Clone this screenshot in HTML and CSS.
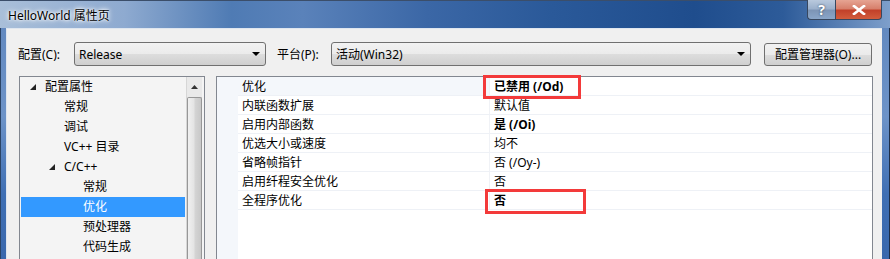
FILE: index.html
```html
<!DOCTYPE html>
<html lang="zh-CN">
<head>
  <meta charset="UTF-8" />
  <title>HelloWorld 属性页</title>
  <link rel="stylesheet" href="styles.css">
</head>
<body>
  <div class="window">
    <div class="titlebar">
      <span class="title">HelloWorld 属性页</span>
      <div class="caption-buttons">
        <div class="cap-btn help">?</div>
        <div class="cap-btn close">
          <svg width="14" height="10" viewBox="0 0 14 10"><path d="M2 1 L12 9 M12 1 L2 9" stroke="#fff" stroke-width="2.6" stroke-linecap="square"/></svg>
        </div>
      </div>
    </div>

    <div class="client">
      <div class="toolbar">
        <label class="field-label">配置(C):</label>
        <div class="combo combo-config">
          <span>Release</span>
          <span class="drop-arrow"></span>
        </div>
        <label class="field-label platform-label">平台(P):</label>
        <div class="combo combo-platform">
          <span>活动(Win32)</span>
          <span class="drop-arrow"></span>
        </div>
        <button class="config-manager">配置管理器(O)...</button>
      </div>

      <div class="main">
        <div class="tree">
          <ul class="tree-list">
            <li class="tree-row lvl0"><span class="expander"><svg width="6" height="6" viewBox="0 0 6 6"><polygon points="6,0 6,6 0,6" fill="#222"/></svg></span>配置属性</li>
            <li class="tree-row lvl1">常规</li>
            <li class="tree-row lvl1">调试</li>
            <li class="tree-row lvl1">VC++ 目录</li>
            <li class="tree-row lvl1 has-arrow"><span class="expander"><svg width="6" height="6" viewBox="0 0 6 6"><polygon points="6,0 6,6 0,6" fill="#222"/></svg></span>C/C++</li>
            <li class="tree-row lvl2">常规</li>
            <li class="tree-row lvl2 selected">优化</li>
            <li class="tree-row lvl2">预处理器</li>
            <li class="tree-row lvl2">代码生成</li>
          </ul>
          <div class="scrollbar">
            <div class="scroll-up"><svg width="7" height="4" viewBox="0 0 7 4"><polygon points="3.5,0 7,4 0,4" fill="#333"/></svg></div>
            <div class="scroll-thumb"></div>
          </div>
        </div>

        <div class="grid">
          <div class="gutter"></div>
          <div class="grid-rows">
            <div class="prop-row current"><span class="prop-name">优化</span><span class="prop-value bold">已禁用 (/Od)</span></div>
            <div class="prop-row"><span class="prop-name">内联函数扩展</span><span class="prop-value">默认值</span></div>
            <div class="prop-row"><span class="prop-name">启用内部函数</span><span class="prop-value bold">是 (/Oi)</span></div>
            <div class="prop-row"><span class="prop-name">优选大小或速度</span><span class="prop-value">均不</span></div>
            <div class="prop-row"><span class="prop-name">省略帧指针</span><span class="prop-value">否 (/Oy-)</span></div>
            <div class="prop-row"><span class="prop-name">启用纤程安全优化</span><span class="prop-value">否</span></div>
            <div class="prop-row"><span class="prop-name">全程序优化</span><span class="prop-value bold">否</span></div>
          </div>
          <div class="mark mark-one"></div>
          <div class="mark mark-two"></div>
        </div>
      </div>
    </div>
  </div>
</body>
</html>
```

FILE: styles.css
```css
body {
  margin: 0;
  padding: 0;
  width: 890px;
  height: 259px;
  overflow: hidden;
  font-family: "Noto Sans", "Noto Sans CJK SC", sans-serif;
  font-size: 12px;
  color: #000;
}

.window {
  height: 259px;
  display: flex;
  flex-direction: column;
  padding: 0 8px 0 6px;
  background:
    linear-gradient(180deg, #5f86bd 0%, #6d93c8 45%, #3f6fb4 75%, #3a68ad 100%);
  box-shadow: inset 1px 0 0 #2b4466, inset -1px 0 0 #1d2e48;
}

.titlebar {
  height: 28px;
  margin: 0 -8px 0 -6px;
  padding: 0 8px 0 8px;
  display: flex;
  align-items: flex-start;
  background: linear-gradient(90deg, #a9bfd9 0%, #8eaad0 14%, #4f7bb4 26%, #5a82ba 34%, #3b67a6 48%, #2a5999 62%, #1f4d8d 78%, #2d5b99 88%, #7e9fcb 100%);
  border-top: 1px solid #3b4e6a;
  box-sizing: border-box;
}

.title {
  margin-top: 5px;
  text-shadow: 0 0 6px #fff, 0 0 4px #fff, 0 0 2px #fff;
  font-size: 12px;
}

.caption-buttons {
  margin-left: auto;
  display: flex;
  margin-top: -1px;
}

.cap-btn {
  height: 20px;
  box-sizing: border-box;
  border: 1px solid #37475f;
  border-top: none;
  display: flex;
  align-items: center;
  justify-content: center;
  color: #fff;
  font-weight: bold;
  font-size: 14px;
}

.help {
  width: 28px;
  border-radius: 0 0 0 4px;
  border-right: none;
  background: linear-gradient(180deg, #b9c9dd 0%, #9cb1cc 45%, #7d95b6 55%, #8aa6c9 100%);
  text-shadow: 0 0 2px #234;
}

.close {
  width: 47px;
  border-radius: 0 0 4px 0;
  background: linear-gradient(180deg, #e6a493 0%, #d7806c 45%, #c2412a 55%, #d25c3c 100%);
}

.client {
  flex: 1;
  background: #f0f0f0;
  border-top: 1px solid #dfe6ef;
  border-left: 1px solid #dfe6ef;
  display: flex;
  flex-direction: column;
  min-height: 0;
}

.toolbar {
  display: flex;
  align-items: center;
  height: 24px;
  margin-top: 13px;
  padding-left: 11px;
}

.field-label {
  width: 56px;
}

.platform-label {
  margin-left: 11px;
  width: 54px;
}

.combo {
  height: 24px;
  box-sizing: border-box;
  border: 1px solid #707070;
  border-radius: 3px;
  background: linear-gradient(180deg, #f2f2f2 0%, #ebebeb 50%, #dddddd 51%, #cfcfcf 100%);
  display: flex;
  align-items: center;
  padding-left: 4px;
  padding-right: 5px;
}

.combo span:first-child {
  flex: 1;
}

.combo-config {
  width: 192px;
}

.combo-platform {
  width: 420px;
}

.drop-arrow {
  width: 0;
  height: 0;
  border-left: 4px solid transparent;
  border-right: 4px solid transparent;
  border-top: 4px solid #000;
}

.config-manager {
  margin-left: 13px;
  width: 108px;
  height: 23px;
  border: 1px solid #707070;
  border-radius: 3px;
  background: linear-gradient(180deg, #f2f2f2 0%, #ebebeb 50%, #dddddd 51%, #cfcfcf 100%);
  font-family: inherit;
  font-size: 12px;
  padding: 0;
  color: #000;
}

.main {
  display: flex;
  flex: 1;
  margin-top: 10px;
  padding-left: 12px;
  gap: 11px;
  min-height: 0;
}

.tree {
  width: 186px;
  box-sizing: border-box;
  border: 1px solid #828790;
  border-bottom: none;
  background: #f4f4f4;
  display: flex;
}

.tree-list {
  list-style: none;
  margin: 0;
  padding: 0;
  width: 167px;
}

.tree-row {
  height: 20px;
  line-height: 20px;
  white-space: nowrap;
  display: flex;
  align-items: center;
}

.expander {
  width: 15px;
  display: flex;
  align-items: center;
  padding-bottom: 1px;
}

.lvl0 { padding-left: 10px; }
.lvl1 { padding-left: 44px; }
.lvl1.has-arrow { padding-left: 29px; }
.lvl2 { padding-left: 63px; }

.selected {
  background: #3399ff;
  color: #fff;
  margin: 0 1px;
  padding-left: 62px;
}

.scrollbar {
  width: 15px;
  margin-right: 2px;
  border-left: 1px solid #d6d6d6;
  background: #e9e9e9;
  display: flex;
  flex-direction: column;
}

.scroll-up {
  height: 20px;
  display: flex;
  align-items: center;
  justify-content: center;
}

.scroll-thumb {
  flex: 1;
  border: 1px solid #979797;
  border-bottom: none;
  border-radius: 2px 2px 0 0;
  background: linear-gradient(90deg, #f0f0f0 0%, #e4e4e4 45%, #d4d4d4 55%, #c8c8c8 100%);
}

.grid {
  position: relative;
  width: 657px;
  box-sizing: border-box;
  border: 1px solid #828790;
  border-bottom: none;
  background: #fff;
  display: flex;
}

.gutter {
  width: 21px;
  background: #f4f7fb;
}

.grid-rows {
  flex: 1;
}

.prop-row {
  height: 19px;
  box-sizing: border-box;
  border-bottom: 1px solid #eef1f6;
  display: flex;
  align-items: center;
}

.prop-name {
  width: 252px;
  box-sizing: border-box;
  padding-left: 4px;
  height: 100%;
  display: flex;
  align-items: center;
  border-right: 1px solid #f0f2f6;
}

.current .prop-name {
  background: #f4f7fb;
}

.prop-value {
  padding-left: 4px;
}

.bold {
  font-weight: bold;
}

.mark {
  position: absolute;
  border: 3px solid #f33a3a;
  box-sizing: border-box;
}

.mark-one {
  left: 266px;
  top: -2px;
  width: 98px;
  height: 24px;
}

.mark-two {
  left: 268px;
  top: 112px;
  width: 101px;
  height: 25px;
}
```
